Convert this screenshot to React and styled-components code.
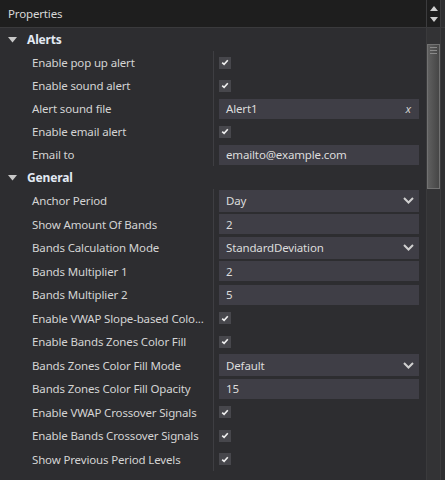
import React from "react";
import styled, { createGlobalStyle } from "styled-components";

const Global = createGlobalStyle`
  html, body { margin: 0; padding: 0; background: #2d2d30; }
  * { box-sizing: border-box; }
`;

const Panel = styled.div`
  width: 445px;
  height: 480px;
  display: flex;
  flex-direction: column;
  overflow: hidden;
  background: #2d2d30;
  font-family: "Segoe UI", "Noto Sans", "Open Sans", sans-serif;
  font-size: 11.5px;
  letter-spacing: -0.15px;
  color: #d6d6d6;
`;

const Header = styled.div`
  height: 28px;
  flex: none;
  display: flex;
  background: #1e1e1e;
  border-bottom: 1px solid #3a3a3c;
`;

const Title = styled.div`
  flex: 1;
  padding-left: 8px;
  display: flex;
  align-items: center;
  color: #d8d8d8;
`;

const Spin = styled.div`
  width: 14px;
  border-left: 1px solid #3c3c3e;
  display: flex;
  flex-direction: column;
  align-items: center;
  justify-content: center;
  gap: 6px;
`;

const Edge = styled.div`
  width: 5px;
  border-left: 1px solid #3c3c3e;
  background: #2f2f31;
`;

const Body = styled.div`
  flex: 1;
  display: flex;
  min-height: 0;
`;

const Content = styled.div`
  flex: 1;
  display: flex;
  flex-direction: column;
`;

const Track = styled.div`
  width: 14px;
  border-left: 1px solid #3a3a3c;
  background: #333335;
  padding-top: 16px;
`;

const Thumb = styled.div`
  height: 145px;
  border: 1px solid #727272;
  background: linear-gradient(to right, #5f5f5f, #505050 60%, #464646);
  display: flex;
  flex-direction: column;
  align-items: flex-end;
  gap: 2px;
  padding: 2px 2px 0 0;
`;

const Grip = styled.div`
  width: 7px;
  height: 1px;
  background: #8a8a8a;
`;

const Section = styled.div`
  height: 23px;
  display: flex;
  align-items: center;
  padding-left: 8px;
  gap: 10px;
  font-weight: 700;
  font-size: 12px;
  color: #e2e9f3;
`;

const Row = styled.div`
  height: ${(p) => p.$h}px;
  display: grid;
  grid-template-columns: 213px 1fr;
  align-items: stretch;
`;

const Label = styled.div`
  padding-left: 32px;
  display: flex;
  align-items: center;
  white-space: nowrap;
  color: #d4d4d4;
`;

const Value = styled.div`
  border-left: 1px solid #3e3e42;
  padding: 0 7px 0 5px;
  display: flex;
  align-items: center;
`;

const Check = styled.div`
  width: 12px;
  height: 12px;
  background: #47474c;
  display: flex;
  align-items: center;
  justify-content: center;
`;

const Field = styled.div`
  flex: 1;
  height: ${(p) => (p.$drop ? 22 : 20)}px;
  background: #3f3e46;
  display: flex;
  align-items: center;
  padding: 0 5px 0 7px;
  color: #dcdcdc;
`;

const FieldText = styled.span`
  flex: 1;
`;

const Clear = styled.span`
  font-style: italic;
  color: #cfcfcf;
  padding-right: 3px;
`;

const Tri = () => (
  <svg width="9" height="6" viewBox="0 0 9 6">
    <path d="M0 0 H9 L4.5 5.5 Z" fill="#c8c8c8" />
  </svg>
);

const Tick = () => (
  <svg width="8" height="7" viewBox="0 0 8 7">
    <path d="M1.2 3.6 L3.1 5.4 L6.8 1.2" stroke="#f0f0f0" strokeWidth="1.6" fill="none" />
  </svg>
);

const Chevron = () => (
  <svg width="11" height="7" viewBox="0 0 11 7">
    <path d="M1 1 L5.5 5.5 L10 1" stroke="#d0d0d0" strokeWidth="2" fill="none" />
  </svg>
);

const Arrow = ({ up }) => (
  <svg width="8" height="5" viewBox="0 0 8 5">
    <path d={up ? "M0 5 H8 L4 0 Z" : "M0 0 H8 L4 5 Z"} fill="#cfcfcf" />
  </svg>
);

const sections = [
  {
    name: "Alerts",
    h: 23,
    items: [
      ["Enable pop up alert", "check"],
      ["Enable sound alert", "check"],
      ["Alert sound file", "file", "Alert1"],
      ["Enable email alert", "check"],
      ["Email to", "text", "emailto@example.com"],
    ],
  },
  {
    name: "General",
    h: 23.5,
    items: [
      ["Anchor Period", "drop", "Day"],
      ["Show Amount Of Bands", "text", "2"],
      ["Bands Calculation Mode", "drop", "StandardDeviation"],
      ["Bands Multiplier 1", "text", "2"],
      ["Bands Multiplier 2", "text", "5"],
      ["Enable VWAP Slope-based Colo...", "check"],
      ["Enable Bands Zones Color Fill", "check"],
      ["Bands Zones Color Fill Mode", "drop", "Default"],
      ["Bands Zones Color Fill Opacity", "text", "15"],
      ["Enable VWAP Crossover Signals", "check"],
      ["Enable Bands Crossover Signals", "check"],
      ["Show Previous Period Levels", "check"],
    ],
  },
];

const Editor = ({ kind, value }) => {
  if (kind === "check")
    return (
      <Check>
        <Tick />
      </Check>
    );
  return (
    <Field $drop={kind === "drop"}>
      <FieldText>{value}</FieldText>
      {kind === "drop" && <Chevron />}
      {kind === "file" && <Clear>x</Clear>}
    </Field>
  );
};

export default function App() {
  return (
    <>
      <Global />
      <Panel>
        <Header>
          <Title>Properties</Title>
          <Spin>
            <Arrow up />
            <Arrow />
          </Spin>
          <Edge />
        </Header>
        <Body>
          <Content>
            {sections.map((s) => (
              <React.Fragment key={s.name}>
                <Section>
                  <Tri />
                  {s.name}
                </Section>
                {s.items.map(([label, kind, value]) => (
                  <Row key={label} $h={s.h}>
                    <Label>{label}</Label>
                    <Value>
                      <Editor kind={kind} value={value} />
                    </Value>
                  </Row>
                ))}
              </React.Fragment>
            ))}
          </Content>
          <Track>
            <Thumb>
              <Grip />
              <Grip />
              <Grip />
            </Thumb>
          </Track>
          <Edge />
        </Body>
      </Panel>
    </>
  );
}
